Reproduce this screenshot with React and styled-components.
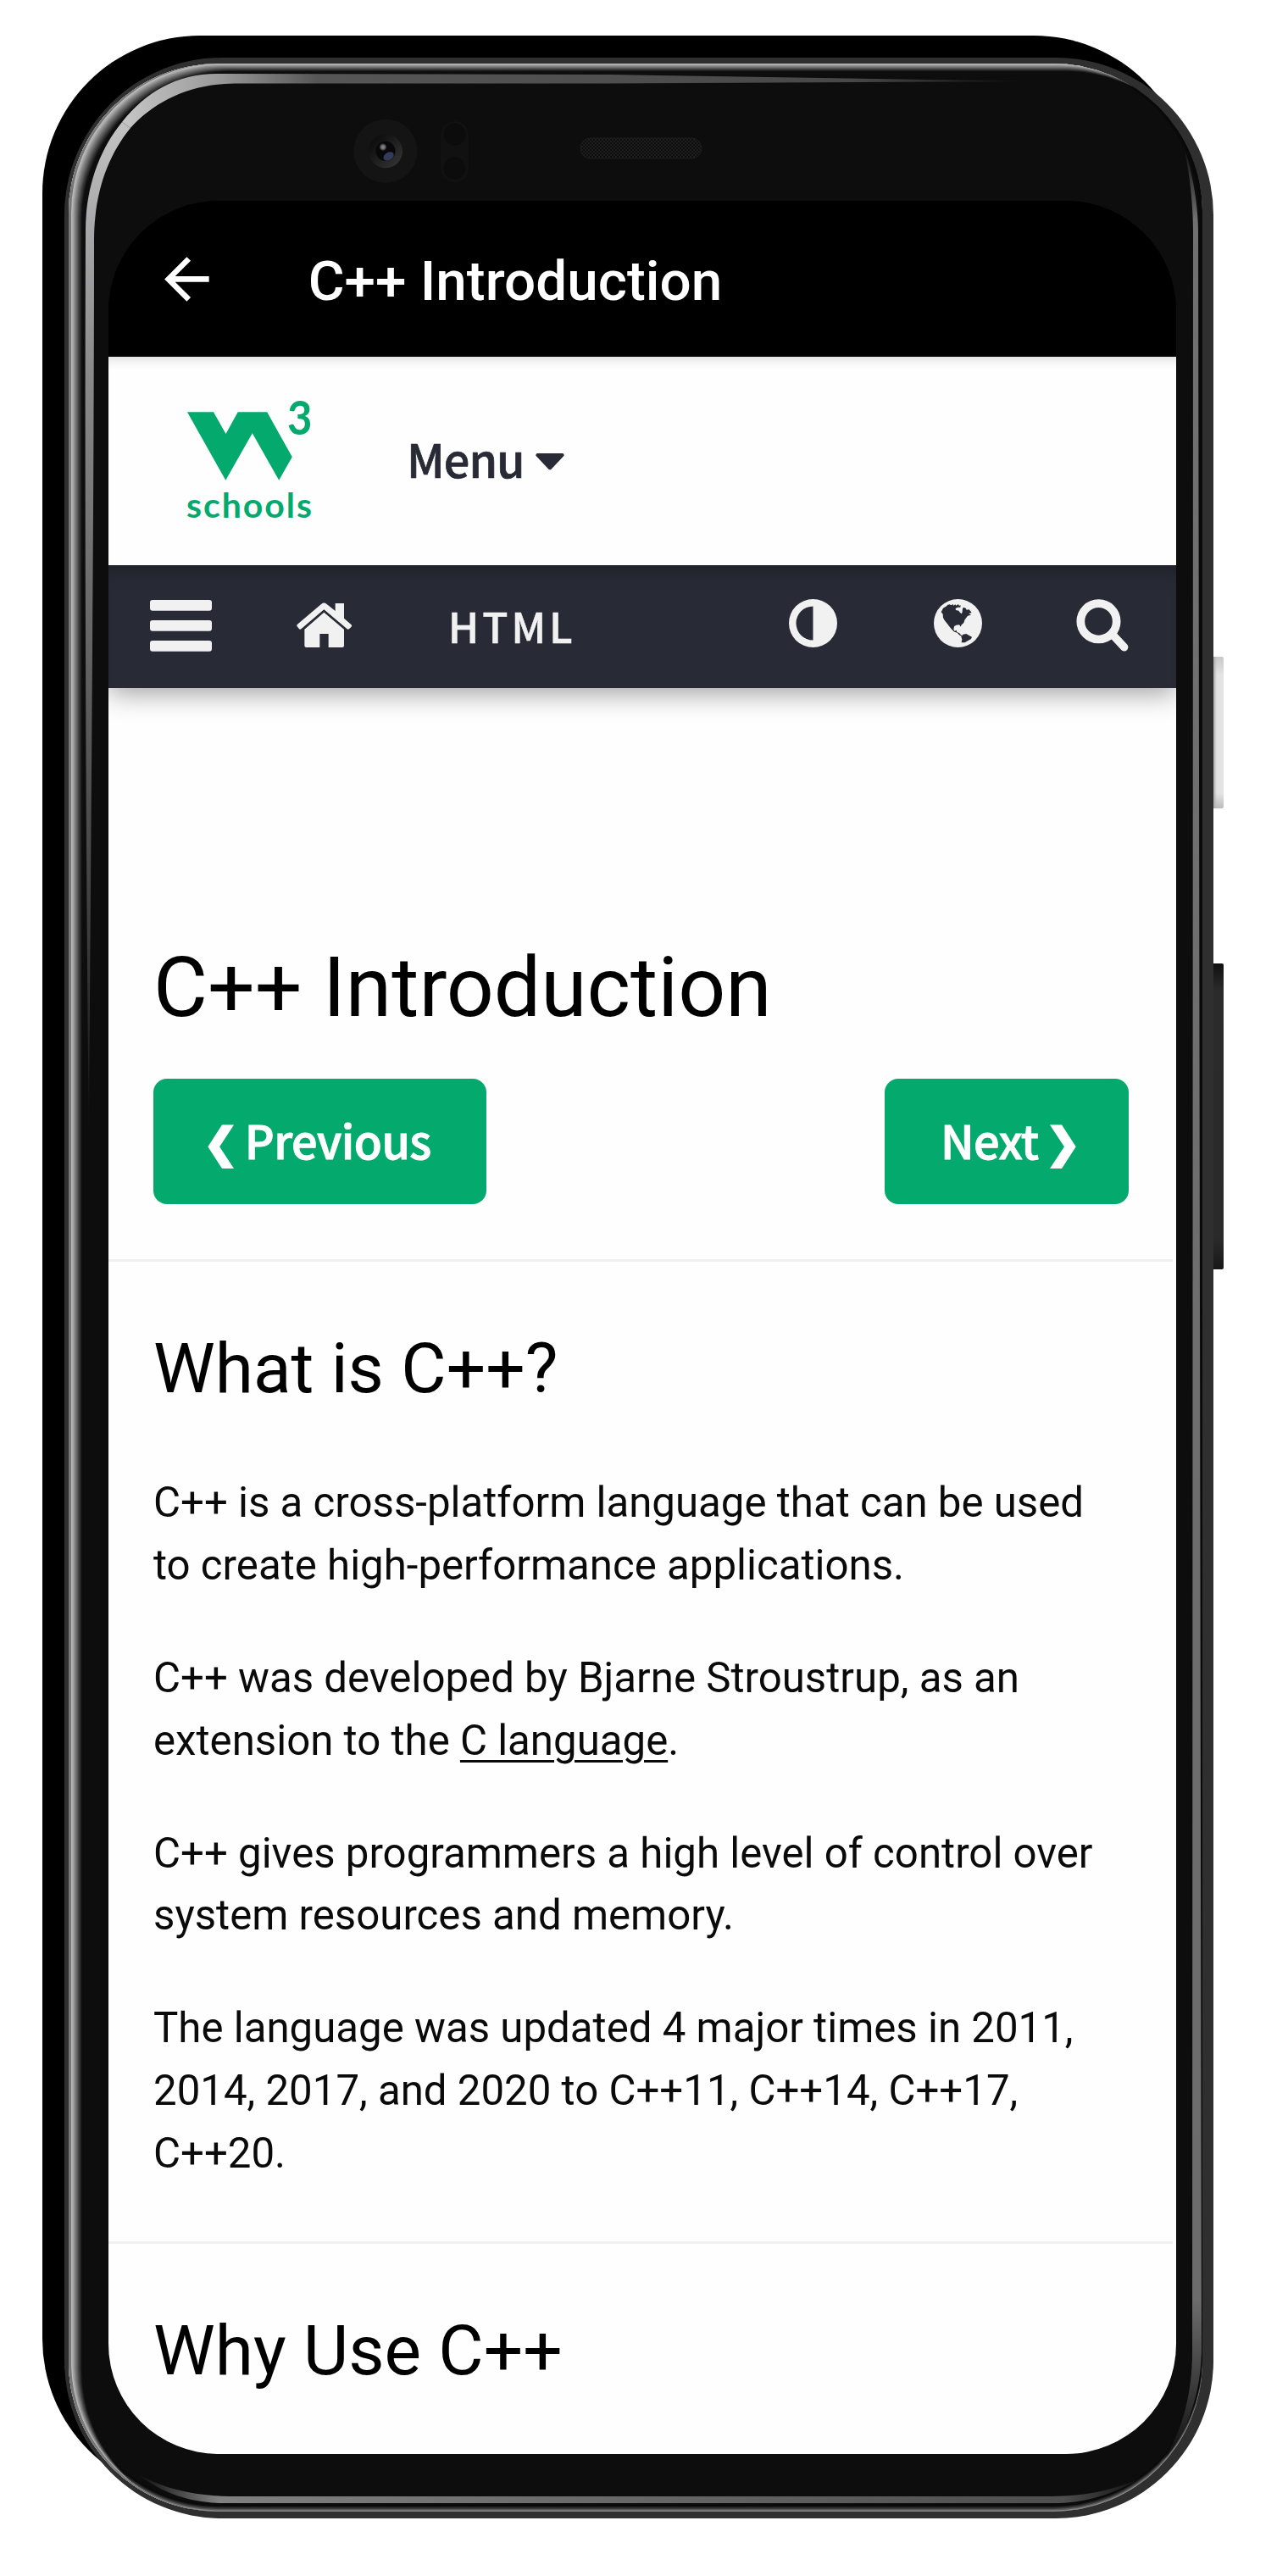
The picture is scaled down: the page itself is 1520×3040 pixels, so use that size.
import React from "react";
import styled, { createGlobalStyle } from "styled-components";

const GlobalStyle = createGlobalStyle`
  *, *::before, *::after { box-sizing: border-box; }
  html, body { margin: 0; padding: 0; background: #fff; }
  body { width: 1520px; height: 3040px; overflow: hidden; }
`;

const ui = `"Noto Sans CJK SC", "Noto Sans", sans-serif`;
const body = `Roboto, "Liberation Sans", sans-serif`;
const green = "#04aa6d";
const navy = "#282a35";
const light = "#f1f1f1";

/* The bevel is brightest at the top left, so it is stacked from thin inset bands. */
const bevel = [
  "inset 3px 0 0 #777",
  ...Array.from({ length: 11 }, (_, i) => {
    const v = Math.round(184 - i * 16.5);
    return `inset ${(4.4 + i * 1.15).toFixed(1)}px ${(1 + i * 0.85).toFixed(1)}px 0 rgb(${v},${v},${v})`;
  }),
  "inset 0 -1.5px 0 #858585",
  "inset 0 -3px 0 #5a5a5a",
  "inset 0 -4.5px 0 #3a3a3a",
  "inset 0 -6px 0 #202020",
  "inset 0 -9px 0 #0a0a0a",
  "inset -4px 0 0 #090909",
].join(", ");

const Canvas = styled.main`
  width: 1520px;
  height: 3040px;
  padding: 68px 0 0 76px;
  background: #fff;
`;

const Phone = styled.div`
  position: relative;
  width: 1356px;
  height: 2904px;
  padding: 169px 44px 76px 52px;
  border-radius: 186px;
  background: #2f2f2f;
  box-shadow: -26px -26px 0 #000;
`;

const Glass = styled.div`
  position: absolute;
  inset: 7px 13px 8px 5px;
  border-radius: 176px;
  background: #0d0d0d;
  box-shadow: ${bevel};
`;

const Hardware = styled.svg`
  position: absolute;
  left: 0;
  top: 0;
  width: 1356px;
  height: 2904px;
`;

const SideKey = styled.div`
  position: absolute;
  left: 100%;
  top: ${(p) => p.$top}px;
  width: 12px;
  height: ${(p) => p.$height}px;
  border-radius: 0 2px 2px 0;
  background: ${(p) => p.$fill};
`;

const Screen = styled.div`
  position: relative;
  display: flex;
  flex-direction: column;
  width: 1260px;
  height: 2659px;
  border-radius: 130px;
  overflow: hidden;
  background: linear-gradient(#000 184px, #fefefe 184px);
`;

const AppBar = styled.header`
  display: flex;
  align-items: center;
  flex: none;
  height: 184px;
  padding-left: 53px;
  gap: 104px;
  background: #000;
  color: #fff;
`;

const AppTitle = styled.span`
  padding-top: 6px;
  font: 500 65.6px/80px ${body};
  white-space: nowrap;
`;

const SiteHeader = styled.div`
  position: relative;
  z-index: 1;
  display: flex;
  align-items: flex-start;
  flex: none;
  height: 246px;
  padding: 31px 0 0 92px;
  background: #fefefe;
  box-shadow: inset 0 14px 14px -12px rgba(0, 0, 0, 0.16);
`;

const LogoText = styled.text`
  font-family: Lato, sans-serif;
  font-weight: ${(p) => p.$weight};
  font-size: ${(p) => p.$size}px;
  fill: ${green};
`;

const MenuButton = styled.div`
  display: flex;
  align-items: center;
  margin: 49px 0 0 104px;
  gap: 13px;
  color: ${navy};
  font: 500 54px/80px ${ui};
  letter-spacing: -1px;
  -webkit-text-stroke: 0.7px currentColor;

  svg {
    margin-top: 7px;
  }
`;

const NavBar = styled.nav`
  position: relative;
  display: flex;
  align-items: flex-start;
  flex: none;
  height: 145px;
  padding-left: 49px;
  background: ${navy};
  color: ${light};
  box-shadow: 0 6px 30px rgba(0, 0, 0, 0.38), inset 0 24px 24px -20px rgba(0, 0, 0, 0.3);
`;

const NavIcon = styled.svg`
  flex: none;
  display: block;
  margin: ${(p) => p.$top}px 0 0 ${(p) => p.$left || 0}px;
  fill: currentColor;
`;

const NavLabel = styled.span`
  width: 402.6px;
  margin: 31px 0 0 113px;
  font: 500 49.5px/80px ${ui};
  letter-spacing: 3.8px;
  -webkit-text-stroke: 0.5px currentColor;
`;

const Article = styled.article`
  display: flex;
  flex-direction: column;
  padding: 288px 56px 0 53px;
  color: #000;
`;

const H1 = styled.h1`
  margin: 0;
  font: 400 98.4px/132px ${body};
  white-space: nowrap;
`;

const Pager = styled.div`
  display: flex;
  justify-content: space-between;
  margin-top: 41px;
`;

const PagerButton = styled.a`
  display: flex;
  align-items: center;
  justify-content: center;
  width: ${(p) => p.$width}px;
  height: 148px;
  gap: 8px;
  padding: ${(p) => p.$pad};
  border-radius: 16px;
  background: ${green};
  color: #fff;
  font: 500 54px/80px ${ui};
  letter-spacing: -0.6px;
  -webkit-text-stroke: 1px currentColor;
`;

const Chevron = styled.span`
  padding-bottom: 1px;
  font-size: 49px;
  -webkit-text-stroke: 2.6px currentColor;
`;

const Rule = styled.hr`
  flex: none;
  width: 1256px;
  height: 3px;
  margin: ${(p) => p.$top}px 0 0 -53px;
  border: 0;
  background: #f0f0f0;
`;

const H2 = styled.h2`
  margin: 71px 0 0;
  font: 400 82px/110px ${body};
  white-space: nowrap;
`;

const P = styled.p`
  margin: ${(p) => p.$top || 59.2}px 0 0;
  font: 400 49.2px/73.8px ${body};
  white-space: nowrap;
  color: #0a0a0a;
`;

const Link = styled.a`
  text-decoration: underline;
  text-decoration-thickness: 3px;
  text-underline-offset: 6px;
`;

function PhoneHardware() {
  return (
    <Hardware viewBox="76 68 1356 2904" aria-hidden="true">
      <defs>
        <linearGradient id="leftEdge" gradientUnits="userSpaceOnUse" x1="0" y1="140" x2="0" y2="1350">
          <stop offset="0" stopColor="#c4c4c4" />
          <stop offset="0.12" stopColor="#a4a4a6" />
          <stop offset="0.25" stopColor="#8a8a8a" />
          <stop offset="0.8" stopColor="#3c3c3c" />
          <stop offset="1" stopColor="#0d0d0d" />
        </linearGradient>
        <linearGradient id="topEdge" gradientUnits="userSpaceOnUse" x1="150" y1="0" x2="1220" y2="0">
          <stop offset="0" stopColor="#c4c4c4" />
          <stop offset="0.1" stopColor="#9a9a9a" />
          <stop offset="0.21" stopColor="#565656" />
          <stop offset="0.8" stopColor="#484848" />
          <stop offset="1" stopColor="#0d0d0d" />
        </linearGradient>
        <linearGradient id="rightEdge" gradientUnits="userSpaceOnUse" x1="0" y1="172" x2="0" y2="2905">
          <stop offset="0" stopColor="#0d0d0d" />
          <stop offset="0.032" stopColor="#707070" />
          <stop offset="0.93" stopColor="#6c6c6c" />
          <stop offset="0.968" stopColor="#3a3a3a" />
          <stop offset="1" stopColor="#0d0d0d" />
        </linearGradient>
        <linearGradient id="bottomEdge" gradientUnits="userSpaceOnUse" x1="163" y1="0" x2="1350" y2="0">
          <stop offset="0" stopColor="#0d0d0d" />
          <stop offset="0.08" stopColor="#808080" />
          <stop offset="0.75" stopColor="#585858" />
          <stop offset="0.92" stopColor="#4e4e4e" />
          <stop offset="1" stopColor="#0d0d0d" />
        </linearGradient>
        <linearGradient id="cameraRing" x1="0" y1="0" x2="1" y2="1">
          <stop offset="0.2" stopColor="#0f0f0f" />
          <stop offset="1" stopColor="#383838" />
        </linearGradient>
        <radialGradient id="glint">
          <stop offset="0" stopColor="#909090" />
          <stop offset="0.5" stopColor="#6a6a6a" />
          <stop offset="1" stopColor="#0b0b0f" />
        </radialGradient>
        <pattern id="mesh" width="4" height="4" patternUnits="userSpaceOnUse">
          <rect width="4" height="4" fill="#1e1e1e" />
          <rect width="2" height="2" fill="#0e0e0e" />
          <rect x="2" y="2" width="2" height="2" fill="#0e0e0e" />
        </pattern>
      </defs>
      <path fill="url(#leftEdge)" d="M105 1345C101 1000 100 600 101 272C101 222 117 177 144 144L154 151C127 184 111 228 111 284C111 600 107 1000 105 1345Z" />
      <path fill="url(#topEdge)" d="M144 144C172 109 208 87 256 87L720 88L1220 96L720 98.5L277 98.5C226 99 184 118 154 151Z" />
      <path fill="url(#rightEdge)" d="M1397 172C1409 210 1414 245 1414 275L1416 1540L1418 2770C1418 2825 1400 2875 1373 2903C1395 2870 1407 2825 1407 2775L1408 275C1408 240 1404 205 1397 172Z" />
      <path fill="url(#bottomEdge)" d="M163 2920C195 2945 230 2954 265 2954L1250 2954C1290 2953 1325 2938 1350 2922C1320 2938 1280 2946 1240 2946L270 2946C230 2945 195 2938 163 2920Z" />
      <circle cx="455" cy="178.3" r="37.6" fill="#141414" />
      <circle cx="455" cy="178.3" r="20" fill="url(#cameraRing)" />
      <circle cx="455" cy="178.3" r="11.5" fill="#08080b" />
      <ellipse cx="458.6" cy="184.4" rx="6.6" ry="4.4" fill="#333b58" transform="rotate(-30 458.6 184.4)" />
      <circle cx="452" cy="173.6" r="4.6" fill="url(#glint)" />
      <rect x="520" y="143" width="33" height="72" rx="16.5" fill="#111" />
      <circle cx="536.5" cy="158.500" r="13" fill="#0c0c0c" />
      <circle cx="536.5" cy="198.500" r="13" fill="#0c0c0c" />
      <rect x="685" y="163" width="143" height="24" rx="12" fill="url(#mesh)" stroke="#1d1d1d" />
    </Hardware>
  );
}

function Logo() {
  return (
    <svg width="156" height="167" viewBox="220 452 156 167" aria-label="W3Schools">
      <path
        fill={green}
        d="M221 486.300H252L266.500 512L280.700 486.300H315.200L344.800 539.300L329.200 566.800L297.800 511.300L266.300 566.800Z"
      />
      <LogoText $weight={700} $size={55} x="339" y="513" textLength="29.500" lengthAdjust="spacingAndGlyphs">3</LogoText>
      <LogoText $weight={700} $size={41} x="220" y="611.200" textLength="148" lengthAdjust="spacing">schools</LogoText>
    </svg>
  );
}

export default function App() {
  return (
    <Canvas>
      <GlobalStyle />
      <Phone>
        <SideKey $top={707} $height={179} $fill="linear-gradient(90deg, #aaa 0, transparent 4px), linear-gradient(#c8c8c8, #e3e3e3 12%, #e3e3e3 90%, #bbb)" />
        <SideKey $top={1069} $height={361} $fill="linear-gradient(#101010, #2b2b2b 9%, #2a2a2a 90%, #181818)" />
        <Glass />
        <PhoneHardware />
        <Screen>
          <AppBar>
            <svg width="78.800" height="78.800" viewBox="0 0 24 24" fill="currentColor" aria-hidden="true">
              <path d="M20 11H7.830l5.590-5.590L12 4l-8 8 8 8 1.410-1.410L7.830 13H20v-2z" />
            </svg>
            <AppTitle>C++ Introduction</AppTitle>
          </AppBar>

          <SiteHeader>
            <Logo />
            <MenuButton>
              Menu
              <svg width="34" height="20" viewBox="0 0 34 20" aria-hidden="true">
                <path fill="currentColor" d="M2 0H32Q34 0.500 33.600 2.800L18.800 18.500Q17 20.200 15.200 18.500L0.400 2.800Q0 0.500 2 0Z" />
              </svg>
            </MenuButton>
          </SiteHeader>

          <NavBar>
            <NavIcon $top={40.5} width="73" height="61" viewBox="0 0 73 61">
              <rect width="73" height="12.700" rx="3" />
              <rect y="24" width="73" height="12.700" rx="3" />
              <rect y="48" width="73" height="12.700" rx="3" />
            </NavIcon>
            <NavIcon $top={44.3} $left={100} width="65.700" height="53.300" viewBox="420 753 197 160">
              <path d="M508 758Q517 751 526 758L557 783V756H588V809L613 831Q618 836 613 840L606 847Q602 850 598 846L517 778L437 846Q433 850 429 847L422 838Q419 834 423 830Z" />
              <path fill="none" stroke={navy} strokeWidth="6" d="M440 850L517 784L595 850" />
              <path d="M517 788L588 848V906Q588 912 582 912H533V864H502V912H454Q448 912 448 906V848Z" />
            </NavIcon>
            <NavLabel>HTML</NavLabel>
            <NavIcon $top={40} width="57" height="57" viewBox="0 0 57 57">
              <path fillRule="evenodd" d="M28.500 0A28.500 28.500 0 1 1 28.500 57A28.500 28.500 0 1 1 28.500 0ZM28.500 8.500A20 20 0 0 0 28.500 48.500Z" />
            </NavIcon>
            <NavIcon $top={40} $left={114} width="57" height="57" viewBox="0 0 171 171">
              <circle cx="85.500" cy="85.500" r="85.500" />
              <path
                fill={navy}
                d="M26 46L33 32L43 26L50 20L56 19L61 22L68 18L70 23L76 19L80 23L86 18L90 23L95 22L94 29L85 29L77 33L78 39L88 41L93 48L99 52L101 45L102 34L105 29L113 32L116 38L125 37L134 48L124 51L132 56L120 59L115 66L109 74L106 84L97 92L96 98L90 91L79 92L72 97L70 107L74 113L80 110L82 117L90 120L96 127L101 130L98 132L90 127L83 119L73 116L65 109L56 98L47 86L38 75L33 66L32 53Z"
              />
              <path fill={navy} d="M103 125L115 123L124 128L135 134L132 141L120 148L110 154L98 154L100 142L97 134Z" />
            </NavIcon>
            <NavIcon $top={40} $left={111} width="64" height="64" viewBox="0 0 64 64">
              <circle cx="26.500" cy="26.300" r="21.200" fill="none" stroke="currentColor" strokeWidth="9.700" />
              <path d="M43 42L56.700 56.700" stroke="currentColor" strokeWidth="9.400" strokeLinecap="round" />
            </NavIcon>
          </NavBar>

          <Article>
            <H1>C++ Introduction</H1>
            <Pager>
              <PagerButton $width={393} $pad="0 6px 4px 0"><Chevron>❮</Chevron><span>Previous</span></PagerButton>
              <PagerButton $width={288} $pad="0 0 4px 8px"><span>Next</span><Chevron>❯</Chevron></PagerButton>
            </Pager>
            <Rule $top={65} />
            <H2>What is C++?</H2>
            <P $top={67}>C++ is a cross-platform language that can be used<br />to create high-performance applications.</P>
            <P>C++ was developed by Bjarne Stroustrup, as an<br />extension to the <Link>C language</Link>.</P>
            <P>C++ gives programmers a high level of control over<br />system resources and memory.</P>
            <P>The language was updated 4 major times in 2011,<br />2014, 2017, and 2020 to C++11, C++14, C++17,<br />C++20.</P>
            <Rule $top={66} />
            <H2>Why Use C++</H2>
          </Article>
        </Screen>
      </Phone>
    </Canvas>
  );
}
